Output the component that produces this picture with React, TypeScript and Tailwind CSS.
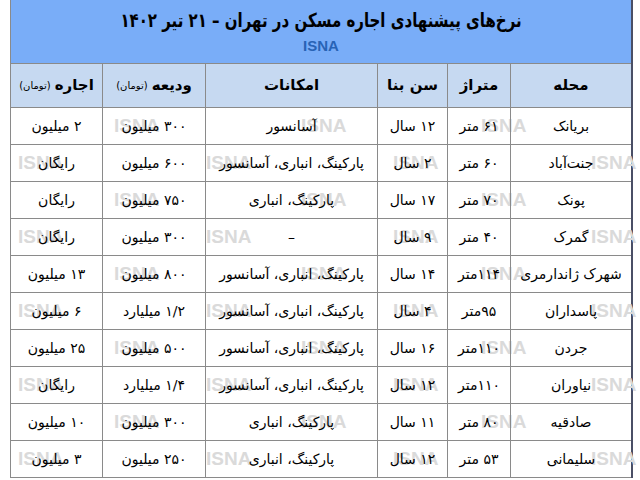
import React from "react";

const rows = [
  ["بریانک", "۶۱ متر", "۱۲ سال", "آسانسور", "۳۰۰ میلیون", "۲ میلیون"],
  ["جنت‌آباد", "۶۰ متر", "۲ سال", "پارکینگ، انباری، آسانسور", "۶۰۰ میلیون", "رایگان"],
  ["پونک", "۷۰ متر", "۱۷ سال", "پارکینگ، انباری", "۷۵۰ میلیون", "رایگان"],
  ["گمرک", "۴۰ متر", "۹ سال", "–", "۳۰۰ میلیون", "رایگان"],
  ["شهرک ژاندارمری", "۱۱۴متر", "۱۴ سال", "پارکینگ، انباری، آسانسور", "۸۰۰ میلیون", "۱۳ میلیون"],
  ["پاسداران", "۹۵متر", "۴ سال", "پارکینگ، انباری، آسانسور", "۱/۲ میلیارد", "۶ میلیون"],
  ["جردن", "۱۱۰متر", "۱۶ سال", "پارکینگ، انباری، آسانسور", "۵۰۰ میلیون", "۲۵ میلیون"],
  ["نیاوران", "۱۱۰متر", "۱۲ سال", "پارکینگ، انباری، آسانسور", "۱/۴ میلیارد", "رایگان"],
  ["صادقیه", "۸۰ متر", "۱۱ سال", "پارکینگ، انباری", "۳۰۰ میلیون", "۱۰ میلیون"],
  ["سلیمانی", "۵۳ متر", "۱۲ سال", "پارکینگ، انباری", "۲۵۰ میلیون", "۳ میلیون"],
];

const grid = "grid grid-cols-[121px_63px_70px_172px_103px_91px]";

const marks: { x: number; y: number }[] = [];
rows.forEach((_, i) => {
  const xs = i % 2 === 0 ? [103, 290, 470] : [7, 195, 382, 580];
  xs.forEach((x) => marks.push({ x, y: i * 37 + 6 }));
});

export default function App() {
  return (
    <div className="w-[640px] h-[480px] bg-white overflow-hidden" style={{ fontFamily: '"DejaVu Sans", sans-serif' }}>
      <div dir="rtl" className="ml-[10px] w-[623px] border-l border-r-2 border-l-[#8a8a8a] border-r-[#4a4f66]">
        <div className="h-[63px] bg-[#79adf8] flex flex-col items-center">
          <div className="mt-[7px] text-[15px] leading-[26px] font-bold text-black scale-y-[1.3]">
            نرخ‌های پیشنهادی اجاره مسکن در تهران – ۲۱ تیر ۱۴۰۲
          </div>
          <div dir="ltr" className="mt-[3px] text-[15px] leading-[20px] font-bold text-[#2863b5]" style={{ fontFamily: '"Liberation Sans", sans-serif' }}>
            ISNA
          </div>
        </div>
        <div className={`${grid} h-[45px] bg-[#c6d9f1] border-t border-b border-[#8a8a8a] text-[15px] font-bold text-black`}>
          <div className="flex items-center justify-center border-l border-[#8a8a8a]">محله</div>
          <div className="flex items-center justify-center border-l border-[#8a8a8a]">متراژ</div>
          <div className="flex items-center justify-center border-l border-[#8a8a8a]">سن بنا</div>
          <div className="flex items-center justify-center border-l border-[#8a8a8a]">امکانات</div>
          <div className="flex items-center justify-center gap-1 border-l border-[#8a8a8a]">
            <span>ودیعه</span>
            <span className="text-[10px] font-normal">(تومان)</span>
          </div>
          <div className="flex items-center justify-center gap-1">
            <span>اجاره</span>
            <span className="text-[10px] font-normal">(تومان)</span>
          </div>
        </div>
        <div className="relative">
          <div className="absolute inset-0 z-0" dir="ltr">
            {marks.map((m, k) => (
              <span
                key={k}
                className="absolute text-[19px] leading-[24px] font-bold text-[#dadada]"
                style={{ left: m.x, top: m.y, fontFamily: '"Liberation Sans", sans-serif' }}
              >
                ISNA
              </span>
            ))}
          </div>
          {rows.map((r, i) => (
            <div key={i} className={`${grid} relative z-10 h-[37px] border-b border-[#8a8a8a] text-[14px] text-black`}>
              {r.map((c, j) => (
                <div
                  key={j}
                  className={`flex items-center justify-center whitespace-nowrap overflow-hidden ${j < 5 ? "border-l border-[#8a8a8a]" : ""}`}
                >
                  {c}
                </div>
              ))}
            </div>
          ))}
        </div>
      </div>
    </div>
  );
}
